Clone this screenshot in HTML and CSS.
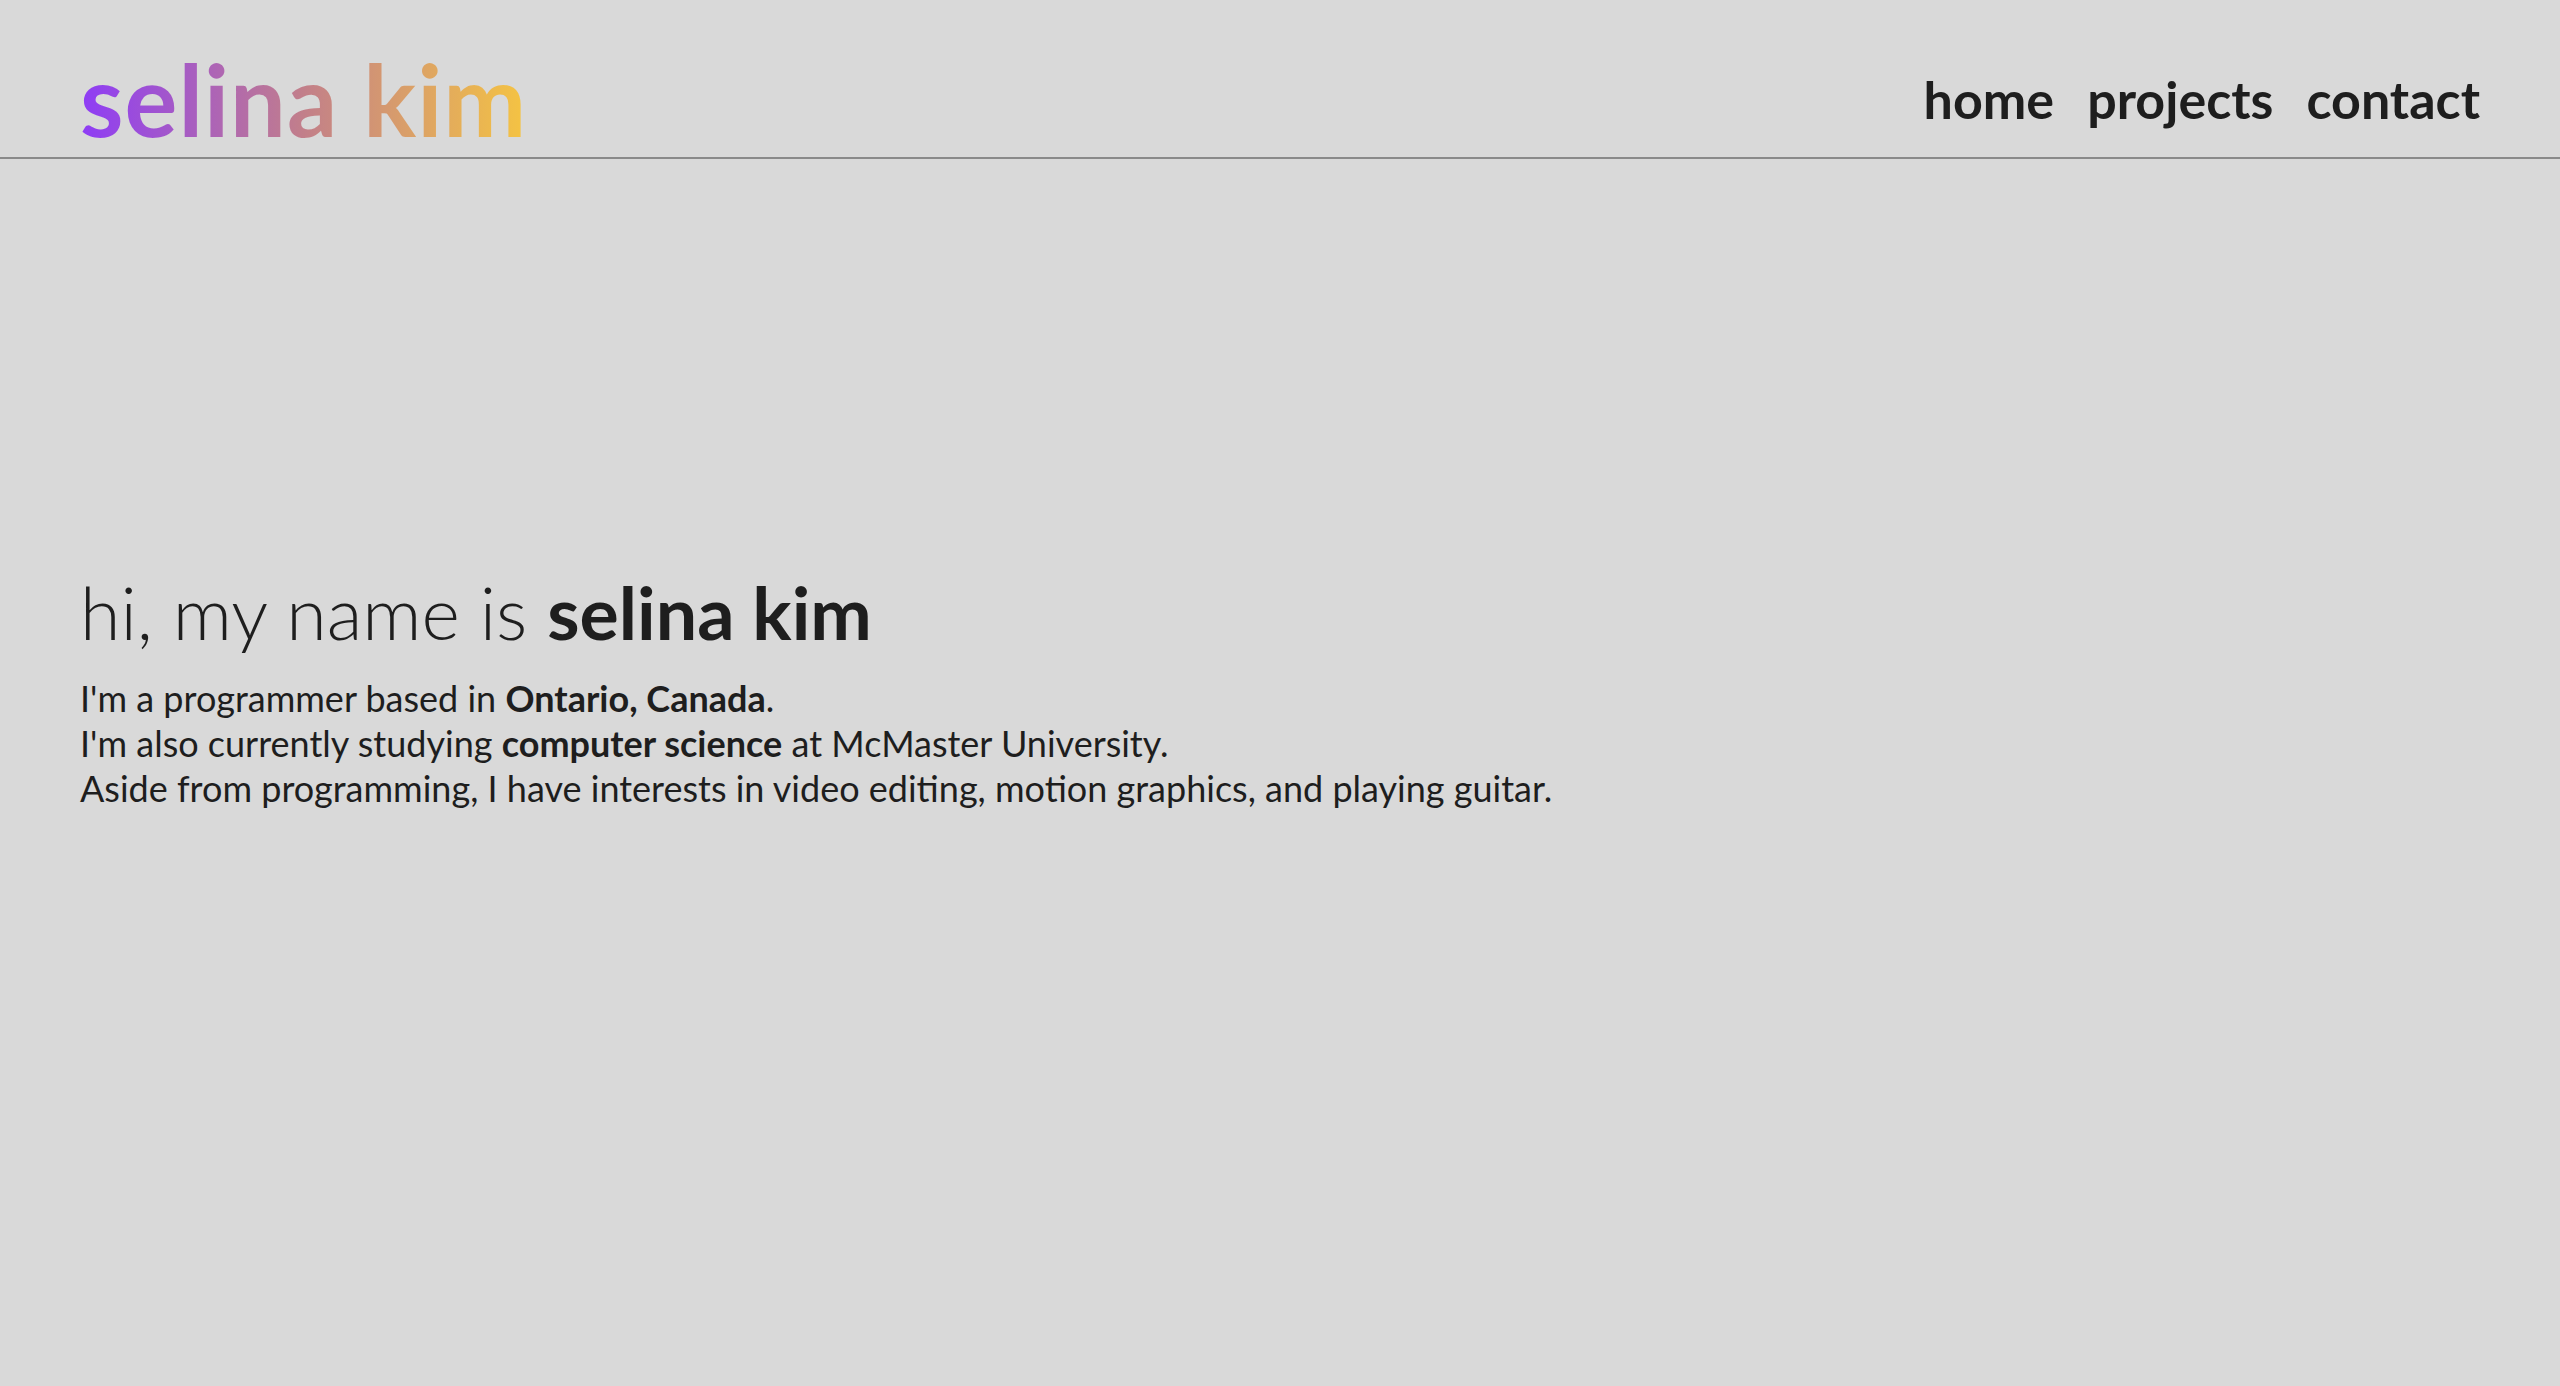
FILE: index.html
```html
<!DOCTYPE html>
<html lang="en">
<head>
<meta charset="utf-8">
<title>selina kim</title>
<link rel="stylesheet" href="styles.css">
</head>
<body>
<header class="site-header">
  <a class="logo" href="#">selina kim</a>
  <nav class="nav">
    <a href="#">home</a>
    <a href="#">projects</a>
    <a href="#">contact</a>
  </nav>
</header>
<main class="hero">
  <h1 class="hero-title">hi, my name is <strong>selina kim</strong></h1>
  <p class="hero-text">I'm a programmer based in <strong>Ontario, Canada</strong>.<br>
  I'm also currently studying <strong>computer science</strong> at McMaster University.<br>
  Aside from programming, I have interests in video editing, motion graphics, and playing guitar.</p>
</main>
</body>
</html>
```

FILE: styles.css
```css
html, body {
  margin: 0;
  padding: 0;
}
body {
  background: #d9d9d9;
  color: #1e1e1e;
  font-family: Lato, "Noto Sans", "Liberation Sans", sans-serif;
  min-height: 100vh;
}
a {
  color: inherit;
  text-decoration: none;
}
.site-header {
  display: flex;
  justify-content: space-between;
  align-items: flex-start;
  height: 157px;
  padding: 0 80px;
  border-bottom: 2px solid #8a8a8a;
  box-sizing: content-box;
}
.logo {
  display: inline-block;
  margin-top: 49px;
  font-size: 99px;
  line-height: 1;
  font-weight: 700;
  letter-spacing: 1px;
  background: linear-gradient(to right, #8e3cf6 0%, #c27f8a 50%, #f5c442 100%);
  -webkit-background-clip: text;
  background-clip: text;
  color: transparent;
}
.nav {
  display: flex;
  gap: 33px;
  margin-top: 73px;
}
.nav a {
  font-size: 52px;
  line-height: 1;
  font-weight: 700;
}
.hero {
  padding: 416px 80px 0;
}
.hero-title {
  margin: 0;
  font-size: 73.5px;
  line-height: 1;
  font-weight: 300;
}
.hero-title strong {
  font-weight: 700;
}
.hero-text {
  margin: 27px 0 0;
  font-size: 36px;
  line-height: 45px;
  font-weight: 400;
}
.hero-text strong {
  font-weight: 700;
}
```
